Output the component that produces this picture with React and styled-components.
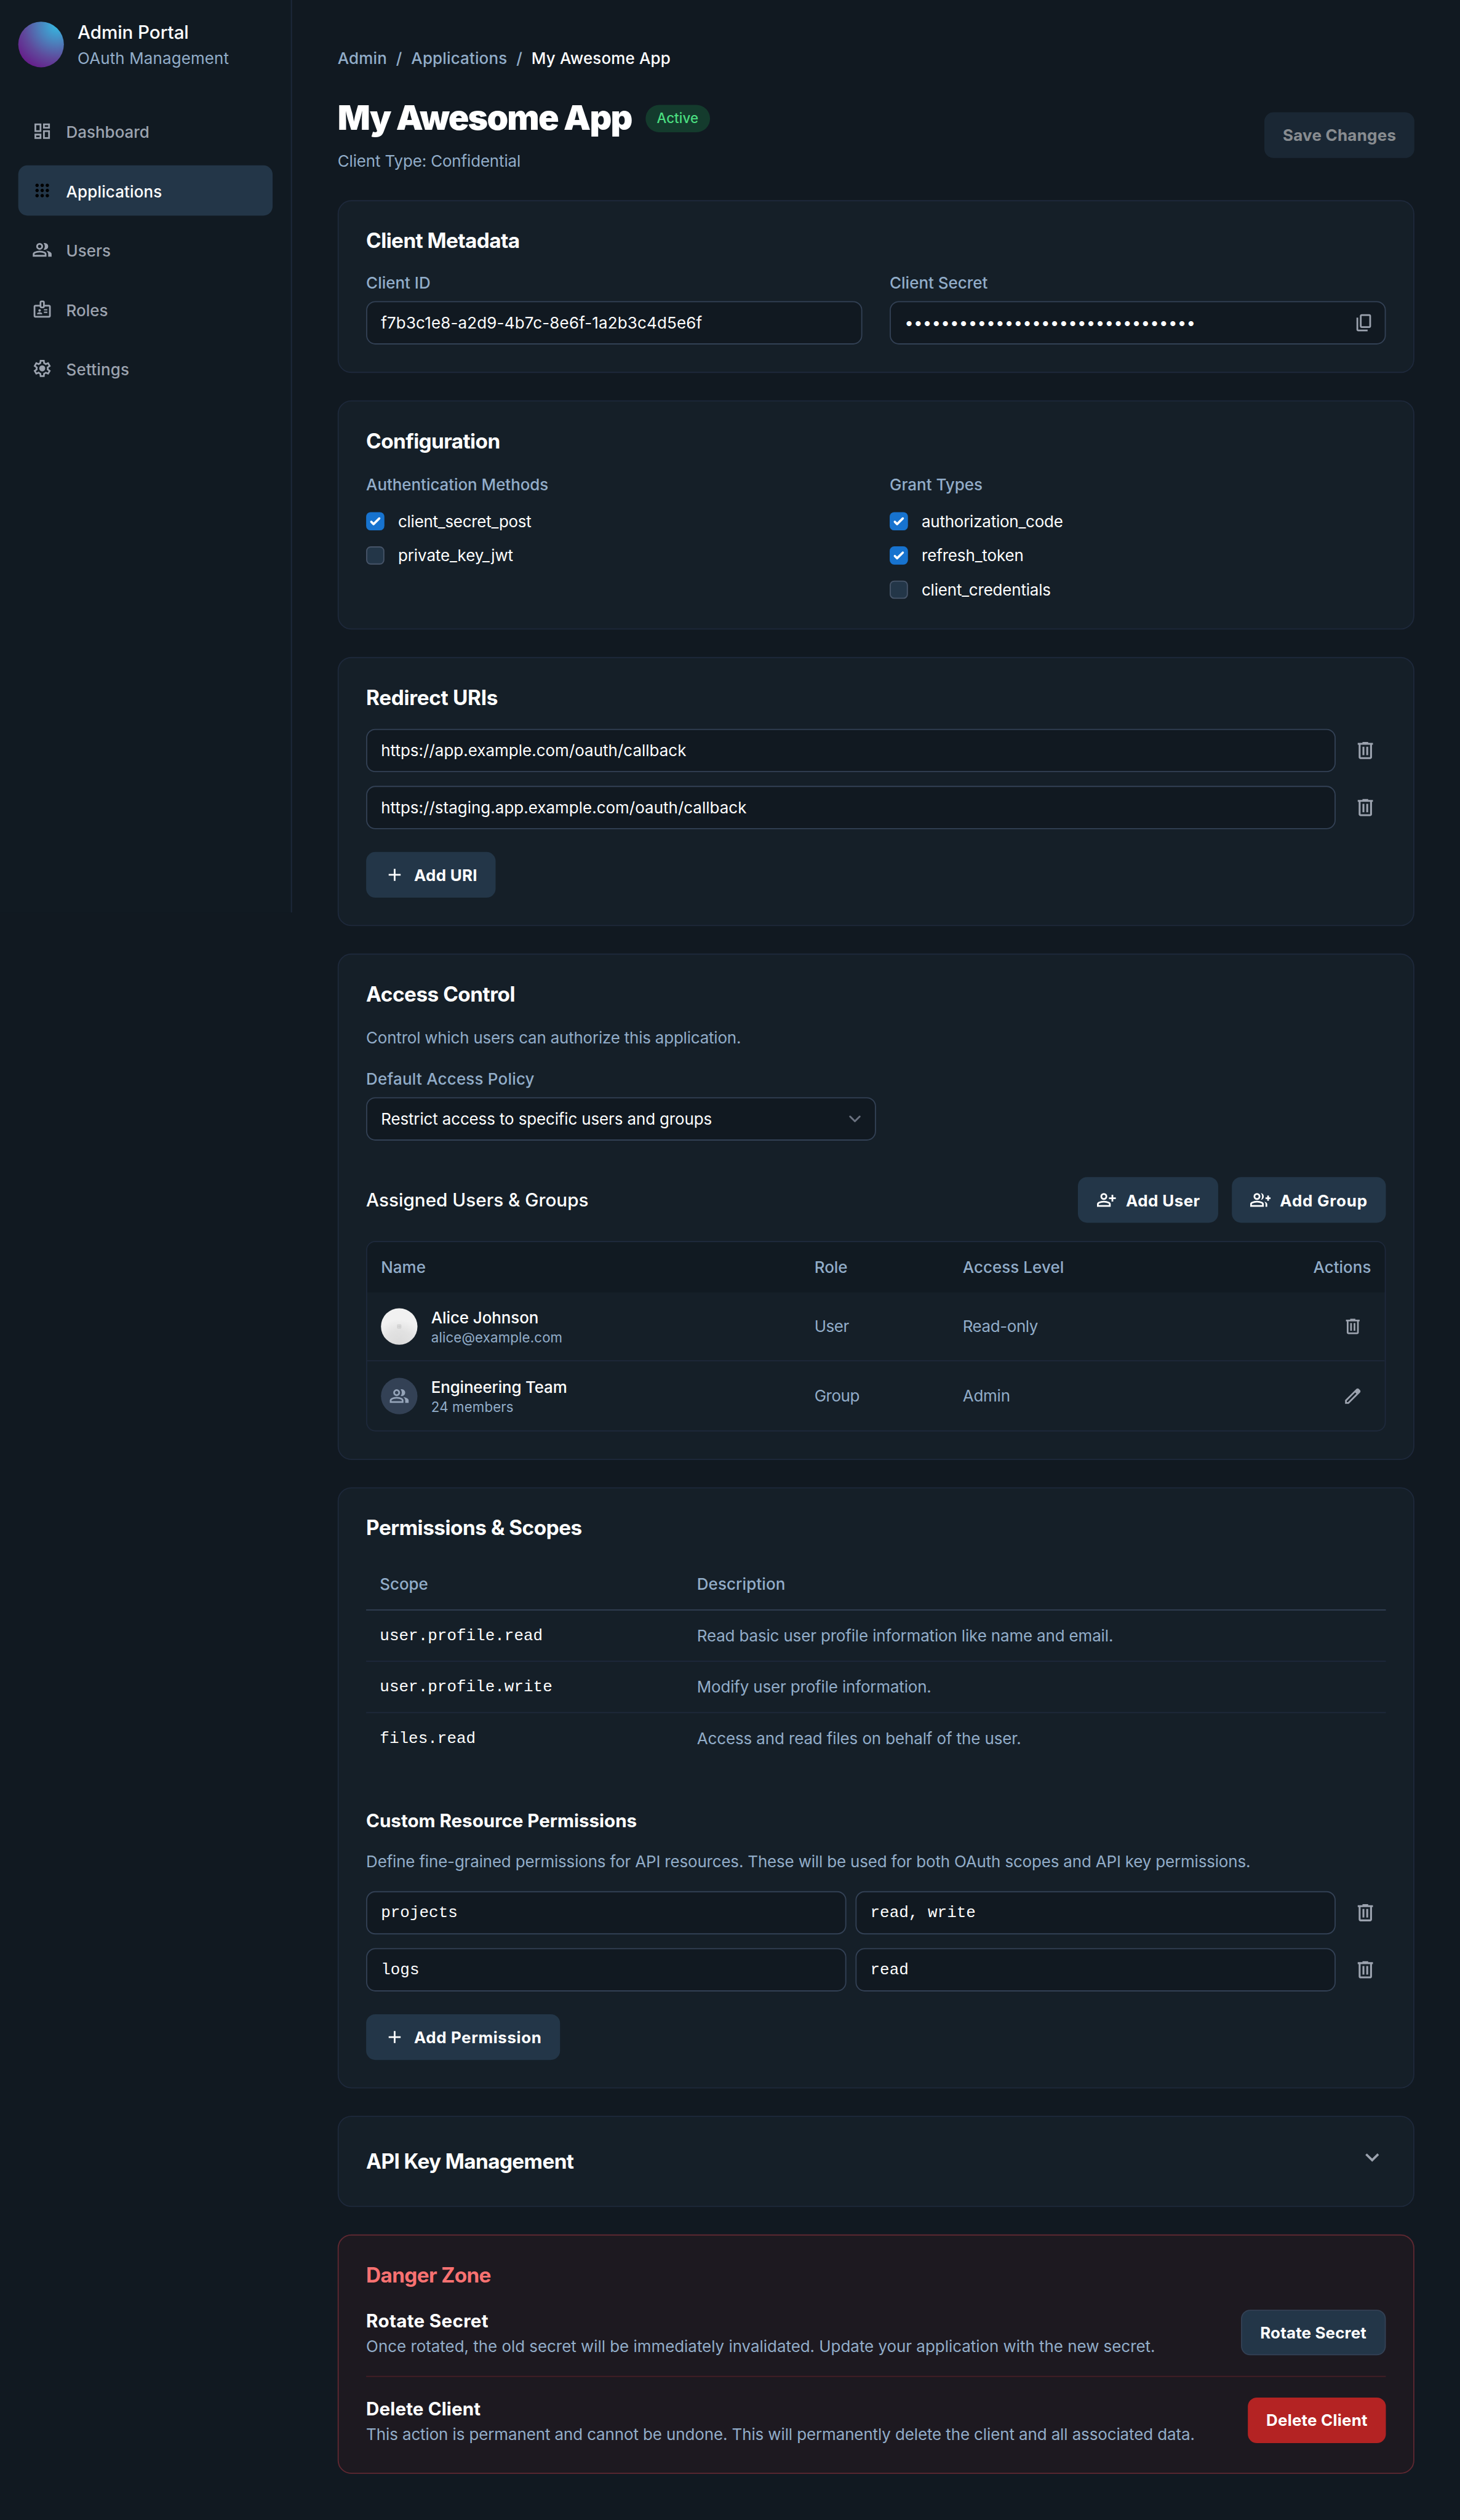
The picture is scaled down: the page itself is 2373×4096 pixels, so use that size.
import React from "react";
import styled, { createGlobalStyle } from "styled-components";

// The layout is 2560px wide (1rem = ten layout units) and is scaled down to fit the window.
const SCALE = 2373 / 2560;

const Global = createGlobalStyle`
  html { font-size: 20px; background: #111921; }
  *, *::before, *::after { box-sizing: border-box; margin: 0; }
  body {
    margin: 0;
    font-family: Inter, "Liberation Sans", sans-serif;
    font-size: 1.4rem;
    line-height: 2.1rem;
    color: #fff;
  }
  button, input { font: inherit; letter-spacing: inherit; color: inherit; }
`;

const MUTED = "#92adc9";

const PATHS = {
  dashboard:
    "M520-600v-240h320v240H520ZM120-440v-400h320v400H120Zm400 320v-400h320v400H520Zm-400 0v-240h320v240H120Zm80-400h160v-240H200v240Zm400 320h160v-240H600v240Zm0-480h160v-80H600v80ZM200-200h160v-80H200v80Z",
  apps:
    "M240-160q-33 0-56.5-23.5T160-240q0-33 23.5-56.5T240-320q33 0 56.5 23.5T320-240q0 33-23.5 56.5T240-160Zm240 0q-33 0-56.5-23.5T400-240q0-33 23.5-56.5T480-320q33 0 56.5 23.5T560-240q0 33-23.5 56.5T480-160Zm240 0q-33 0-56.5-23.5T640-240q0-33 23.5-56.5T720-320q33 0 56.5 23.5T800-240q0 33-23.5 56.5T720-160ZM240-400q-33 0-56.5-23.5T160-480q0-33 23.5-56.5T240-560q33 0 56.5 23.5T320-480q0 33-23.5 56.5T240-400Zm240 0q-33 0-56.5-23.5T400-480q0-33 23.5-56.5T480-560q33 0 56.5 23.5T560-480q0 33-23.5 56.5T480-400Zm240 0q-33 0-56.5-23.5T640-480q0-33 23.5-56.5T720-560q33 0 56.5 23.5T800-480q0 33-23.5 56.5T720-400ZM240-640q-33 0-56.5-23.5T160-720q0-33 23.5-56.5T240-800q33 0 56.5 23.5T320-720q0 33-23.5 56.5T240-640Zm240 0q-33 0-56.5-23.5T400-720q0-33 23.5-56.5T480-800q33 0 56.5 23.5T560-720q0 33-23.5 56.5T480-640Zm240 0q-33 0-56.5-23.5T640-720q0-33 23.5-56.5T720-800q33 0 56.5 23.5T800-720q0 33-23.5 56.5T720-640Z",
  group:
    "M40-160v-112q0-34 17.5-62.5T104-378q62-31 126-46.5T360-440q66 0 130 15.5T616-378q29 15 46.5 43.5T680-272v112H40Zm720 0v-120q0-44-24.5-84.5T666-434q51 6 96 20.5t84 35.5q36 20 55 44.5t19 53.5v120H760ZM360-480q-66 0-113-47t-47-113q0-66 47-113t113-47q66 0 113 47t47 113q0 66-47 113t-113 47Zm400-160q0 66-47 113t-113 47q-11 0-28-2.5t-28-5.5q27-32 41.5-71t14.5-81q0-42-14.5-81T544-792q14-5 28-6.5t28-1.5q66 0 113 47t47 113ZM120-240h480v-32q0-11-5.5-20T580-306q-54-27-109-40.5T360-360q-56 0-111 13.5T140-306q-9 5-14.5 14t-5.5 20v32Zm240-320q33 0 56.5-23.5T440-640q0-33-23.5-56.5T360-720q-33 0-56.5 23.5T280-640q0 33 23.5 56.5T360-560Z",
  badge:
    "M160-80q-33 0-56.5-23.5T80-160v-440q0-33 23.5-56.5T160-680h200v-120q0-33 23.5-56.5T440-880h80q33 0 56.5 23.5T600-800v120h200q33 0 56.5 23.5T880-600v440q0 33-23.5 56.5T800-80H160Zm0-80h640v-440H600q0 33-23.5 56.5T520-520h-80q-33 0-56.5-23.5T360-600H160v440Zm80-80h240v-18q0-17-9.5-31.5T444-312q-20-9-40.5-13.5T360-330q-23 0-43.5 4.5T276-312q-17 8-26.5 22.5T240-258v18Zm320-60h160v-60H560v60Zm-200-60q25 0 42.5-17.5T420-420q0-25-17.5-42.5T360-480q-25 0-42.5 17.5T300-420q0 25 17.5 42.5T360-360Zm200-60h160v-60H560v60ZM440-600h80v-200h-80v200Z",
  settings:
    "m370-80-16-128q-13-5-24.5-12T307-235l-119 50L78-375l103-78q-1-7-1-13.5v-27q0-6.5 1-13.5L78-585l110-190 119 50q11-8 23-15t24-12l16-128h220l16 128q13 5 24.5 12t22.5 15l119-50 110 190-103 78q1 7 1 13.5v27q0 6.5-2 13.5l103 78-110 190-118-50q-11 8-23 15t-24 12L590-80H370Zm70-80h79l14-106q31-8 57.5-23.5T639-327l99 41 39-68-86-65q5-14 7-29.5t2-31.5q0-16-2-31.5t-7-29.5l86-65-39-68-99 42q-22-23-48.5-38.5T533-694l-13-106h-79l-14 106q-31 8-57.5 23.5T321-633l-99-41-39 68 86 64q-5 15-7 30t-2 32q0 16 2 31t7 30l-86 65 39 68 99-42q22 23 48.5 38.5T427-266l13 106Zm42-180q58 0 99-41t41-99q0-58-41-99t-99-41q-59 0-99.5 41T342-480q0 58 40.5 99t99.5 41Z",
  copy:
    "M360-240q-33 0-56.5-23.5T280-320v-480q0-33 23.5-56.5T360-880h360q33 0 56.5 23.5T800-800v480q0 33-23.5 56.5T720-240H360Zm0-80h360v-480H360v480ZM200-80q-33 0-56.5-23.5T120-160v-560h80v560h440v80H200Z",
  trash:
    "M280-120q-33 0-56.5-23.5T200-200v-520h-40v-80h200v-40h240v40h200v80h-40v520q0 33-23.5 56.5T680-120H280Zm400-600H280v520h400v-520ZM360-280h80v-360h-80v360Zm160 0h80v-360h-80v360Z",
  add: "M440-440H200v-80h240v-240h80v240h240v80H520v240h-80v-240Z",
  personAdd:
    "M720-400v-120H600v-80h120v-120h80v120h120v80H800v120h-80Zm-360-80q-66 0-113-47t-47-113q0-66 47-113t113-47q66 0 113 47t47 113q0 66-47 113t-113 47ZM40-160v-112q0-34 17.5-62.5T104-378q62-31 126-46.5T360-440q66 0 130 15.5T616-378q29 15 46.5 43.5T680-272v112H40Zm80-80h480v-32q0-11-5.5-20T580-306q-54-27-109-40.5T360-360q-56 0-111 13.5T140-306q-9 5-14.5 14t-5.5 20v32Zm240-320q33 0 56.5-23.5T440-640q0-33-23.5-56.5T360-720q-33 0-56.5 23.5T280-640q0 33 23.5 56.5T360-560Z",
  groupAdd:
    "M500-482q29-32 44.5-73t15.5-85q0-44-15.5-85T500-798q60 8 100 53t40 105q0 60-40 105t-100 53Zm220 322v-120q0-36-16-68.5T662-406q51 18 94.5 46.5T800-280v120h-80Zm80-280v-80h-80v-80h80v-80h80v80h80v80h-80v80h-80Zm-480-40q-66 0-113-47t-47-113q0-66 47-113t113-47q66 0 113 47t47 113q0 66-47 113t-113 47ZM0-160v-112q0-34 17.5-62.5T64-378q62-31 126-46.5T320-440q66 0 130 15.5T576-378q29 15 46.5 43.5T640-272v112H0Zm320-400q33 0 56.5-23.5T400-640q0-33-23.5-56.5T320-720q-33 0-56.5 23.5T240-640q0 33 23.5 56.5T320-560ZM80-240h480v-32q0-11-5.5-20T540-306q-54-27-109-40.5T320-360q-56 0-111 13.5T100-306q-9 5-14.5 14T80-272v32Z",
  edit:
    "M200-200h57l391-391-57-57-391 391v57Zm-80 80v-170l528-527q12-11 26.5-17t30.5-6q16 0 31 6t26 18l55 56q12 11 17.5 26t5.5 30q0 16-5.5 30.5T817-647L290-120H120Zm640-584-56-56 56 56Zm-141 85-28-29 57 57-29-28Z",
  expand: "M480-345 240-585l56-56 184 183 184-184 56 56-240 240Z",
};

const Glyph = styled.svg`
  display: block;
  flex: none;
  width: ${(p) => p.$size}rem;
  height: ${(p) => p.$size}rem;
  fill: currentColor;
`;
const Icon = ({ name, size = 1.8 }) => (
  <Glyph $size={size} viewBox="0 -960 960 960" aria-hidden="true">
    <path d={PATHS[name]} />
  </Glyph>
);

/* Text run with its own tracking, in tenths of a rem. */
const Run = styled.span`
  letter-spacing: ${(p) => (p.$ls || 0) / 10}rem;
`;

const Viewport = styled.div`
  width: 2373px;
  height: 4096px;
  overflow: hidden;
`;
const Page = styled.div`
  display: flex;
  align-items: flex-start;
  width: 128rem;
  height: 221rem;
  background: #111921;
  transform: scale(${SCALE});
  transform-origin: 0 0;
`;

/* ---- Sidebar ---- */
const Sidebar = styled.aside`
  display: flex;
  flex-direction: column;
  gap: 3.1rem;
  flex: none;
  width: 25.6rem;
  height: 80rem;
  padding: 1.6rem;
  background: #111a22;
  border-right: 2px solid #1e293b;
`;
const Brand = styled.div`
  display: flex;
  align-items: center;
  gap: 1.2rem;
  height: 4.6rem;
`;
const BrandMark = styled.div`
  width: 4rem;
  height: 4rem;
  border-radius: 50%;
  background: radial-gradient(circle at 85% 8%, #35b9e2 0%, #4b82bd 30%, #5f4a9c 58%, #671787 88%);
`;
const BrandName = styled.h1`
  font-size: 1.6rem;
  line-height: 2.4rem;
  font-weight: 500;
`;
const BrandSub = styled.p`
  color: ${MUTED};
`;
const Nav = styled.nav`
  display: flex;
  flex-direction: column;
  gap: 0.8rem;
`;
const NavItem = styled.a`
  display: flex;
  align-items: center;
  gap: 1.2rem;
  height: 4.4rem;
  padding: 0 1.2rem;
  border-radius: 0.8rem;
  font-weight: 500;
  color: ${(p) => (p.$active ? "#fff" : "#9ca3af")};
  background: ${(p) => (p.$active ? "#233648" : "transparent")};
  svg { color: ${(p) => (p.$active ? "#000" : "inherit")}; }
  span { padding-top: 4px; }
`;

/* ---- Page header ---- */
const Main = styled.main`
  flex: 1;
  padding: 4rem;
  display: flex;
  flex-direction: column;
  gap: 2.4rem;
`;
const Crumbs = styled.nav`
  display: flex;
  gap: 0.8rem;
  height: 2.1rem;
  padding-top: 1px;
  font-weight: 500;
  letter-spacing: 0.008rem;
  color: ${MUTED};
  b { font-weight: 500; color: #fff; }
`;
const Header = styled.header`
  display: flex;
  align-items: center;
  justify-content: space-between;
`;
const TitleRow = styled.div`
  display: flex;
  align-items: center;
  gap: 1.2rem;
  height: 3.75rem;
  margin-bottom: 0.8rem;
`;
const Title = styled.h1`
  padding-bottom: 0.15rem;
  font-size: 3rem;
  line-height: 3.6rem;
  font-weight: 900;
  letter-spacing: -0.033em;
`;
const Badge = styled.span`
  padding: 0.4rem 1rem;
  border-radius: 99rem;
  font-size: 1.2rem;
  line-height: 1.6rem;
  font-weight: 500;
  letter-spacing: 0.006rem;
  color: #4ade80;
  background: rgba(34, 197, 94, 0.2);
`;
const Text = styled.p`
  color: ${MUTED};
  margin-top: ${(p) => p.$mt || 0}rem;
`;
const BUTTON_TONES = { plain: "#233648", danger: "#b42323" };
const Button = styled.button`
  display: inline-flex;
  align-items: center;
  gap: 0.8rem;
  flex: none;
  height: 4rem;
  padding: 0 1.6rem;
  border: ${(p) => (p.$outlined ? "2px solid #334155" : "0")};
  border-radius: 0.8rem;
  font-weight: 700;
  background: ${(p) => BUTTON_TONES[p.$tone || "plain"]};
  opacity: ${(p) => (p.disabled ? 0.5 : 1)};
  margin-top: ${(p) => p.$mt || 0}rem;
  svg + span { padding-top: 2px; }
`;
const IconButton = styled.button`
  display: flex;
  align-items: center;
  justify-content: center;
  flex: none;
  width: ${(p) => p.$w}rem;
  height: ${(p) => p.$w}rem;
  padding: 0;
  border: 0;
  background: none;
  color: #9ca3af;
`;

/* ---- Cards and fields ---- */
const Card = styled.section`
  display: flex;
  flex-direction: column;
  align-items: stretch;
  height: ${(p) => p.$h}rem;
  padding: calc(2.5rem - 2px);
  border: 2px solid ${(p) => (p.$danger ? "#5e2831" : "#1e293b")};
  border-radius: 1.2rem;
  background: ${(p) => (p.$danger ? "#1d1920" : "#151f28")};
`;
const CardTitle = styled.h2`
  font-size: 1.8rem;
  line-height: 2.1rem;
  font-weight: 700;
  letter-spacing: ${(p) => (p.$ls ?? -0.27) / 10}rem;
  color: ${(p) => (p.$danger ? "#f87171" : "#fff")};
`;
const SubTitle = styled.h3`
  font-size: 1.6rem;
  line-height: 2.4rem;
  font-weight: ${(p) => p.$weight || 700};
  letter-spacing: ${(p) => (p.$ls || 0) / 10}rem;
  margin-top: ${(p) => p.$mt || 0}rem;
`;
const Columns = styled.div`
  display: grid;
  grid-template-columns: 1fr 1fr;
  column-gap: 2.4rem;
  margin-top: ${(p) => p.$mt}rem;
`;
const Field = styled.div`
  display: flex;
  flex-direction: column;
  margin-top: ${(p) => p.$mt || 0}rem;
  width: ${(p) => p.$w || "auto"};
`;
const Label = styled.span`
  font-weight: 500;
  line-height: 2rem;
  letter-spacing: ${(p) => (p.$ls || 0) / 10}rem;
  color: ${MUTED};
  margin-bottom: ${(p) => p.$mb ?? 0.6}rem;
`;
const Box = styled.div`
  display: flex;
  align-items: center;
  justify-content: space-between;
  flex: 1 1 0;
  min-height: 3.8rem;
  height: 3.8rem;
  padding: 0 calc(${(p) => p.$pr ?? 1.3}rem - 2px) 0 calc(1.3rem - 2px);
  border: 2px solid #334155;
  border-radius: 0.8rem;
  background: #111921;
  color: ${(p) => (p.$icon ? "#9ca3af" : "#fff")};
  font-family: ${(p) => (p.$mono ? '"Liberation Mono", monospace' : "inherit")};
  span {
    color: #fff;
    padding-top: ${(p) => (p.$mono ? "2px" : "0")};
  }
`;
const Chevron = styled.svg`
  width: 2.1rem;
  height: 2.1rem;
  fill: none;
  stroke: #6b7280;
  stroke-width: 1.5;
  stroke-linecap: round;
  stroke-linejoin: round;
`;
const Rows = styled.div`
  display: flex;
  flex-direction: column;
  gap: 1.2rem;
  margin-top: ${(p) => p.$mt}rem;
`;
const Row = styled.div`
  display: flex;
  align-items: center;
  gap: 0.8rem;
`;
const Checks = styled.div`
  display: flex;
  flex-direction: column;
  gap: 1rem;
`;
const Check = styled.label`
  display: flex;
  align-items: center;
  gap: 1.2rem;
  height: 2rem;
`;
const Tick = styled.span`
  display: grid;
  width: 1.6rem;
  height: 1.6rem;
  border-radius: 0.4rem;
  border: ${(p) => (p.$on ? "0" : "2px solid #475569")};
  background: ${(p) => (p.$on ? "#1773cf" : "#233648")};
`;
const Option = ({ on, ls, children }) => (
  <Check>
    <Tick $on={on}>
      {on && (
        <svg viewBox="0 0 16 16" fill="#fff">
          <path d="M12.207 4.793a1 1 0 010 1.414l-5 5a1 1 0 01-1.414 0l-2-2a1 1 0 011.414-1.414L6.5 9.086l4.293-4.293a1 1 0 011.414 0z" />
        </svg>
      )}
    </Tick>
    <Run $ls={ls}>{children}</Run>
  </Check>
);

/* ---- Assigned users ---- */
const Bar = styled.div`
  display: flex;
  align-items: center;
  justify-content: space-between;
  margin-top: ${(p) => p.$mt || 0}rem;
`;
const Actions = styled.div`
  display: flex;
  gap: 1.2rem;
`;
const Grid = styled.div`
  margin-top: 1.6rem;
  height: 16.7rem;
  border: 2px solid #1e293b;
  border-radius: 0.8rem;
  overflow: hidden;
`;
const GridRow = styled.div`
  display: grid;
  grid-template-columns: 38rem 13rem 1fr auto;
  align-items: center;
  height: ${(p) => (p.$head ? 4.4 : 6.05)}rem;
  padding-left: 1.2rem;
  padding-right: 1.2rem;
  color: ${MUTED};
  font-weight: ${(p) => (p.$head ? 500 : 400)};
  background: ${(p) => (p.$head ? "#111a22" : "transparent")};
  border-bottom: ${(p) => (p.$line ? "2px solid #1e293b" : "0")};
`;
const Person = styled.div`
  display: flex;
  align-items: center;
  gap: 1.2rem;
`;
const Face = styled.div`
  display: grid;
  place-items: center;
  width: 3.2rem;
  height: 3.2rem;
  border-radius: 50%;
  color: #94a3b8;
  background: ${(p) => (p.$photo ? "radial-gradient(circle at 50% 100%, #dadada 0%, #e2e2e2 35%, #f1f1f1 62%)" : "#334155")};
`;
const FaceMark = styled.svg`
  width: 0.4rem;
  height: 0.4rem;
  fill: none;
  stroke: #c4c4c4;
`;
const Name = styled.div`
  font-weight: 500;
  line-height: 2rem;
  letter-spacing: ${(p) => (p.$ls || 0) / 10}rem;
  color: #fff;
`;
const Small = styled.div`
  font-size: 1.2rem;
  line-height: 1.6rem;
  letter-spacing: 0.008rem;
`;

/* ---- Scopes ---- */
const Scopes = styled.div`
  margin-top: 1.7rem;
`;
const ScopeRow = styled.div`
  display: grid;
  grid-template-columns: 27.8rem 1fr;
  align-items: center;
  height: 4.5rem;
  padding: 0 1.2rem;
  color: ${MUTED};
  font-weight: ${(p) => (p.$head ? 500 : 400)};
  border-bottom: 2px solid ${(p) => (p.$head ? "#334155" : p.$last ? "transparent" : "#1e293b")};
`;
const Code = styled.code`
  padding-top: 2px;
  font-family: "Liberation Mono", monospace;
  font-size: 1.4rem;
  color: #fff;
`;

/* ---- Danger zone ---- */
const DangerRow = styled.div`
  display: flex;
  align-items: center;
  justify-content: space-between;
  height: 4.4rem;
`;
const Divider = styled.hr`
  border: 0;
  height: 2px;
  margin: 1.6rem 0;
  background: #451e26;
`;
const DangerName = styled.h3`
  font-size: 1.6rem;
  line-height: 2.4rem;
  font-weight: 700;
  letter-spacing: ${(p) => (p.$ls || 0) / 10}rem;
`;
const DangerText = styled.p`
  line-height: 2rem;
  letter-spacing: ${(p) => (p.$ls || 0) / 10}rem;
  color: ${MUTED};
`;
const Expand = styled.span`
  margin-top: -0.6rem;
  color: #9ca3af;
`;

const NAV = [
  ["dashboard", "Dashboard", 0],
  ["apps", "Applications", 0.08],
  ["group", "Users", 0],
  ["badge", "Roles", 0],
  ["settings", "Settings", 0.1],
];
const SCOPES = [
  ["user.profile.read", "Read basic user profile information like name and email.", -0.08],
  ["user.profile.write", "Modify user profile information.", -0.085],
  ["files.read", "Access and read files on behalf of the user.", -0.065],
];
const URIS = ["https://app.example.com/oauth/callback", "https://staging.app.example.com/oauth/callback"];
const PERMISSIONS = [
  ["projects", "read, write"],
  ["logs", "read"],
];

const Remove = () => (
  <IconButton $w={3.6} aria-label="Remove">
    <Icon name="trash" size={2} />
  </IconButton>
);

export default function App() {
  return (
    <Viewport>
      <Global />
      <Page>
        <Sidebar>
          <Brand>
            <BrandMark />
            <div>
              <BrandName>
                <Run $ls={-0.06}>Admin Portal</Run>
              </BrandName>
              <BrandSub>
                <Run $ls={0.07}>OAuth Management</Run>
              </BrandSub>
            </div>
          </Brand>
          <Nav>
            {NAV.map(([icon, label, ls]) => (
              <NavItem key={label} $active={label === "Applications"}>
                <Icon name={icon} />
                <Run $ls={ls}>{label}</Run>
              </NavItem>
            ))}
          </Nav>
        </Sidebar>

        <Main>
          <Crumbs>
            <span>Admin</span>
            <span>/</span>
            <span>Applications</span>
            <span>/</span>
            <b>My Awesome App</b>
          </Crumbs>

          <Header>
            <div>
              <TitleRow>
                <Title>My Awesome App</Title>
                <Badge>Active</Badge>
              </TitleRow>
              <Text>
                <Run $ls={-0.08}>Client Type: Confidential</Run>
              </Text>
            </div>
            <Button disabled>
              <Run $ls={0.13}>Save Changes</Run>
            </Button>
          </Header>

          <Card $h={15.15}>
            <CardTitle $ls={-0.32}>Client Metadata</CardTitle>
            <Columns $mt={1.65}>
              <Field>
                <Label>Client ID</Label>
                <Box>
                  <Run $ls={0.09}>f7b3c1e8-a2d9-4b7c-8e6f-1a2b3c4d5e6f</Run>
                </Box>
              </Field>
              <Field>
                <Label>Client Secret</Label>
                <Box $icon $pr={1}>
                  <Run $ls={0.1}>••••••••••••••••••••••••••••••••</Run>
                  <Icon name="copy" />
                </Box>
              </Field>
            </Columns>
          </Card>

          <Card $h={20.1}>
            <CardTitle $ls={-0.33}>Configuration</CardTitle>
            <Columns $mt={1.8}>
              <Field>
                <Label $mb={1.2} $ls={-0.03}>Authentication Methods</Label>
                <Checks>
                  <Option on ls={-0.14}>client_secret_post</Option>
                  <Option ls={-0.06}>private_key_jwt</Option>
                </Checks>
              </Field>
              <Field>
                <Label $mb={1.2}>Grant Types</Label>
                <Checks>
                  <Option on ls={-0.12}>authorization_code</Option>
                  <Option on ls={-0.07}>refresh_token</Option>
                  <Option ls={-0.1}>client_credentials</Option>
                </Checks>
              </Field>
            </Columns>
          </Card>

          <Card $h={23.6}>
            <CardTitle $ls={-0.18}>Redirect URIs</CardTitle>
            <Rows $mt={1.7}>
              {URIS.map((uri) => (
                <Row key={uri}>
                  <Box>
                    <Run $ls={0.01}>{uri}</Run>
                  </Box>
                  <Remove />
                </Row>
              ))}
            </Rows>
            <Row>
              <Button $mt={2}>
                <Icon name="add" />
                <Run $ls={0.14}>Add URI</Run>
              </Button>
            </Row>
          </Card>

          <Card $h={44.4}>
            <CardTitle>Access Control</CardTitle>
            <Text $mt={1.75}>
              <Run $ls={-0.11}>Control which users can authorize this application.</Run>
            </Text>
            <Field $mt={1.55} $w="50%">
              <Label $ls={0.11}>Default Access Policy</Label>
              <Box $pr={0.8}>
                <Run $ls={-0.07}>Restrict access to specific users and groups</Run>
                <Chevron viewBox="0 0 20 20">
                  <path d="M6 8l4 4 4-4" />
                </Chevron>
              </Box>
            </Field>
            <Bar $mt={3.2}>
              <SubTitle $weight={500}>Assigned Users &amp; Groups</SubTitle>
              <Actions>
                <Button>
                  <Icon name="personAdd" />
                  <Run $ls={0.22}>Add User</Run>
                </Button>
                <Button>
                  <Icon name="groupAdd" />
                  <Run $ls={0.42}>Add Group</Run>
                </Button>
              </Actions>
            </Bar>
            <Grid>
              <GridRow $head>
                <span>Name</span>
                <span>Role</span>
                <Run $ls={0.03}>Access Level</Run>
                <span>Actions</span>
              </GridRow>
              <GridRow $line>
                <Person>
                  <Face $photo>
                    <FaceMark viewBox="0 0 8 8">
                      <path d="M1 1h6v6h-6zM1 4h6M4 1v6" />
                    </FaceMark>
                  </Face>
                  <div>
                    <Name $ls={-0.05}>Alice Johnson</Name>
                    <Small>alice@example.com</Small>
                  </div>
                </Person>
                <Run $ls={-0.25}>User</Run>
                <Run $ls={-0.22}>Read-only</Run>
                <IconButton $w={3.2} aria-label="Remove">
                  <Icon name="trash" />
                </IconButton>
              </GridRow>
              <GridRow>
                <Person>
                  <Face>
                    <Icon name="group" />
                  </Face>
                  <div>
                    <Name $ls={-0.1}>Engineering Team</Name>
                    <Small>24 members</Small>
                  </div>
                </Person>
                <Run $ls={-0.25}>Group</Run>
                <Run $ls={-0.12}>Admin</Run>
                <IconButton $w={3.2} aria-label="Edit">
                  <Icon name="edit" />
                </IconButton>
              </GridRow>
            </Grid>
          </Card>

          <Card $h={52.7}>
            <CardTitle>Permissions &amp; Scopes</CardTitle>
            <Scopes>
              <ScopeRow $head>
                <Run $ls={-0.05}>Scope</Run>
                <Run $ls={0.06}>Description</Run>
              </ScopeRow>
              {SCOPES.map(([scope, text, ls], i) => (
                <ScopeRow key={scope} $last={i === 2}>
                  <Code>{scope}</Code>
                  <Run $ls={ls}>{text}</Run>
                </ScopeRow>
              ))}
            </Scopes>
            <SubTitle $mt={3.75} $ls={-0.04}>Custom Resource Permissions</SubTitle>
            <Text $mt={1.3}>
              <Run $ls={-0.092}>
                Define fine-grained permissions for API resources. These will be used for both OAuth scopes and API key permissions.
              </Run>
            </Text>
            <Rows $mt={1.55}>
              {PERMISSIONS.map(([resource, verbs]) => (
                <Row key={resource}>
                  <Box $mono>
                    <span>{resource}</span>
                  </Box>
                  <Box $mono>
                    <span>{verbs}</span>
                  </Box>
                  <Remove />
                </Row>
              ))}
            </Rows>
            <Row>
              <Button $mt={2}>
                <Icon name="add" />
                <Run $ls={0.31}>Add Permission</Run>
              </Button>
            </Row>
          </Card>

          <Card $h={8}>
            <Bar $mt={0.45}>
              <CardTitle $ls={-0.34}>API Key Management</CardTitle>
              <Expand>
                <Icon name="expand" size={2.4} />
              </Expand>
            </Bar>
          </Card>

          <Card $h={21} $danger>
            <CardTitle $danger $ls={-0.36}>Danger Zone</CardTitle>
            <Field $mt={1.8}>
              <DangerRow>
                <div>
                  <DangerName $ls={0.15}>Rotate Secret</DangerName>
                  <DangerText $ls={-0.017}>
                    Once rotated, the old secret will be immediately invalidated. Update your application with the new secret.
                  </DangerText>
                </div>
                <Button $outlined>
                  <Run $ls={0.08}>Rotate Secret</Run>
                </Button>
              </DangerRow>
              <Divider />
              <DangerRow>
                <div>
                  <DangerName $ls={0.04}>Delete Client</DangerName>
                  <DangerText $ls={-0.06}>
                    This action is permanent and cannot be undone. This will permanently delete the client and all associated data.
                  </DangerText>
                </div>
                <Button $tone="danger">
                  <Run $ls={0.12}>Delete Client</Run>
                </Button>
              </DangerRow>
            </Field>
          </Card>
        </Main>
      </Page>
    </Viewport>
  );
}
